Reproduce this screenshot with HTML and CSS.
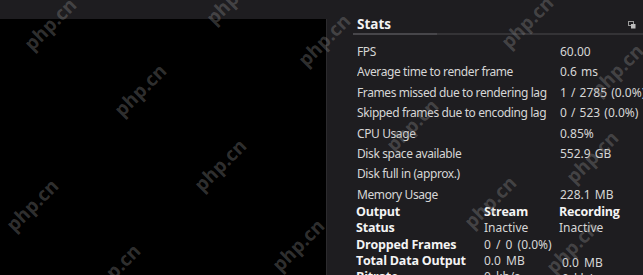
FILE: index.html
```html
<!DOCTYPE html>
<html>
<head>
<meta charset="utf-8">
<link rel="stylesheet" href="styles.css">
</head>
<body>
<div class="app">
  <div class="left">
    <div class="preview"></div>
  </div>
  <div class="dock">
    <div class="dock-head">
      <span class="dock-title">Stats</span>
      <svg class="float-icon" width="8" height="8" viewBox="0 0 8 8"><rect x="0.5" y="0.5" width="5" height="4" fill="none" stroke="#9a9a9a"/><rect x="3" y="3" width="4.5" height="4.5" fill="#bdbdbd"/></svg>
    </div>
    <div class="sep"><span class="sep-tab"></span></div>
    <div class="stats">
      <div class="row"><span class="k">FPS</span><span class="v">60.00</span></div>
      <div class="row"><span class="k">Average time to render frame</span><span class="v">0.6 ms</span></div>
      <div class="row"><span class="k">Frames missed due to rendering lag</span><span class="v">1 / 2785 (0.0%)</span></div>
      <div class="row"><span class="k">Skipped frames due to encoding lag</span><span class="v">0 / 523 (0.0%)</span></div>
      <div class="row"><span class="k">CPU Usage</span><span class="v">0.85%</span></div>
      <div class="row"><span class="k">Disk space available</span><span class="v">552.9 GB</span></div>
      <div class="row"><span class="k">Disk full in (approx.)</span><span class="v"></span></div>
      <div class="row"><span class="k">Memory Usage</span><span class="v">228.1 MB</span></div>
    </div>
    <div class="outputs">
      <span class="h">Output</span><span class="h">Stream</span><span class="h">Recording</span>
      <span class="h">Status</span><span>Inactive</span><span>Inactive</span>
      <span class="h">Dropped Frames</span><span>0 / 0 (0.0%)</span><span></span>
      <span class="h">Total Data Output</span><span>0.0 MB</span><span class="low">0.0 MB</span>
      <span class="h">Bitrate</span><span>0 kb/s</span><span class="low">0 kb/s</span>
    </div>
  </div>
</div>
<div class="wm" style="left:18px;top:12px">php.cn</div>
<div class="wm" style="left:200px;top:-14px">php.cn</div>
<div class="wm" style="left:108px;top:78px">php.cn</div>
<div class="wm" style="left:292px;top:28px">php.cn</div>
<div class="wm" style="left:495px;top:10px">php.cn</div>
<div class="wm" style="left:585px;top:58px">php.cn</div>
<div class="wm" style="left:380px;top:113px">php.cn</div>
<div class="wm" style="left:188px;top:153px">php.cn</div>
<div class="wm" style="left:0px;top:193px">php.cn</div>
<div class="wm" style="left:266px;top:233px">php.cn</div>
<div class="wm" style="left:82px;top:258px">php.cn</div>
<div class="wm" style="left:458px;top:190px">php.cn</div>
<div class="wm" style="left:540px;top:235px">php.cn</div>
<div class="wm" style="left:560px;top:145px">php.cn</div>
</body>
</html>
```
FILE: styles.css
```css
html, body {
  margin: 0;
  padding: 0;
  background: #1e1d20;
  overflow: hidden;
  width: 643px;
  height: 275px;
}
.app {
  display: grid;
  grid-template-columns: 327px 1fr;
  height: 275px;
  font-family: "Noto Sans", "Open Sans", sans-serif;
}
.left {
  padding-top: 19px;
  display: flex;
}
.preview {
  flex: 1;
  background: #000;
  border-right: 1px solid #2c2b2e;
}
.dock {
  padding-left: 26px;
  position: relative;
}
.dock-head {
  height: 33px;
  display: flex;
  align-items: flex-end;
  justify-content: space-between;
  padding-left: 4px;
  padding-right: 9px;
}
.dock-title {
  font-family: "Open Sans", sans-serif;
  font-weight: 700;
  font-size: 13.5px;
  color: #f2f2f2;
  line-height: 18px;
}
.float-icon {
  margin-bottom: 4px;
}
.sep {
  height: 2px;
  background: #343336;
  display: flex;
}
.sep-tab {
  width: 84px;
  background: #47464a;
}
.stats {
  padding-top: 7px;
  padding-left: 4px;
}
.row {
  display: grid;
  grid-template-columns: 203px 1fr;
  height: 20.4px;
  line-height: 20.4px;
  font-size: 12px;
  color: #d6d6d6;
  white-space: nowrap;
  overflow: hidden;
}
.row .k {
  letter-spacing: -0.4px;
}
.row .v {
  word-spacing: 1px;
}
.outputs {
  margin-top: -1px;
  padding-left: 3px;
  display: grid;
  grid-template-columns: 128px 75px 1fr;
  grid-auto-rows: 16.3px;
  line-height: 16.3px;
  font-size: 12px;
  word-spacing: 2px;
  color: #d6d6d6;
  white-space: nowrap;
}
.outputs .h {
  font-family: "Open Sans", sans-serif;
  font-weight: 700;
  color: #f4f4f4;
  font-size: 12.5px;
  letter-spacing: -0.2px;
  word-spacing: 0;
}
.outputs .low {
  position: relative;
  top: 2px;
  left: 3px;
}
.wm {
  position: absolute;
  font-family: "Open Sans", sans-serif;
  font-weight: 700;
  font-size: 19px;
  color: rgba(150, 150, 150, 0.33);
  transform: rotate(-45deg);
  transform-origin: center;
  white-space: nowrap;
  pointer-events: none;
  line-height: 24px;
}
```
